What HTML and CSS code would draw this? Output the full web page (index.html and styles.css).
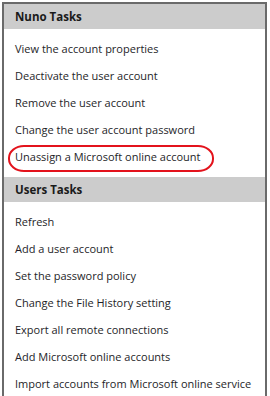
FILE: index.html
```html
<!DOCTYPE html>
<html>
  <head>
    <meta charset="utf-8" />
    <title>Tasks</title>
    <link rel="stylesheet" href="styles.css">
  </head>
  <body>
    <div class="panel">
      <div class="section">
        <div class="section-title">Nuno Tasks</div>
        <ul class="tasks">
          <li class="task">View the account properties</li>
          <li class="task">Deactivate the user account</li>
          <li class="task">Remove the user account</li>
          <li class="task">Change the user account password</li>
          <li class="task marked">Unassign a Microsoft online account</li>
        </ul>
      </div>
      <div class="section">
        <div class="section-title">Users Tasks</div>
        <ul class="tasks">
          <li class="task">Refresh</li>
          <li class="task">Add a user account</li>
          <li class="task">Set the password policy</li>
          <li class="task">Change the File History setting</li>
          <li class="task">Export all remote connections</li>
          <li class="task">Add Microsoft online accounts</li>
          <li class="task">Import accounts from Microsoft online service</li>
        </ul>
      </div>
    </div>
  </body>
</html>
```

FILE: styles.css
```css
body {
    margin: 0;
    background: #ffffff;
    font-family: "Open Sans", "Noto Sans", sans-serif;
    font-size: 11px;
    color: #1e1e28;
}
.panel {
    margin: 2px 0 0 2px;
    width: 261px;
    height: 400px;
    border: 2px solid #6a6a6a;
    border-bottom: none;
}
.section-title {
    background: #cccccc;
    height: 25px;
    line-height: 25px;
    padding-left: 11px;
    font-weight: bold;
    font-size: 11.5px;
    color: #1a1a1a;
}
.tasks {
    list-style: none;
    margin: 0;
    padding: 6px 0 7px 0;
}
.task {
    height: 27px;
    line-height: 27px;
    padding-left: 11px;
    white-space: nowrap;
}
.marked {
    position: relative;
}
.marked::after {
    content: "";
    position: absolute;
    left: 4px;
    top: 2px;
    width: 202px;
    height: 23px;
    border: 2px solid #e3131c;
    border-radius: 16px / 13px;
}
```
